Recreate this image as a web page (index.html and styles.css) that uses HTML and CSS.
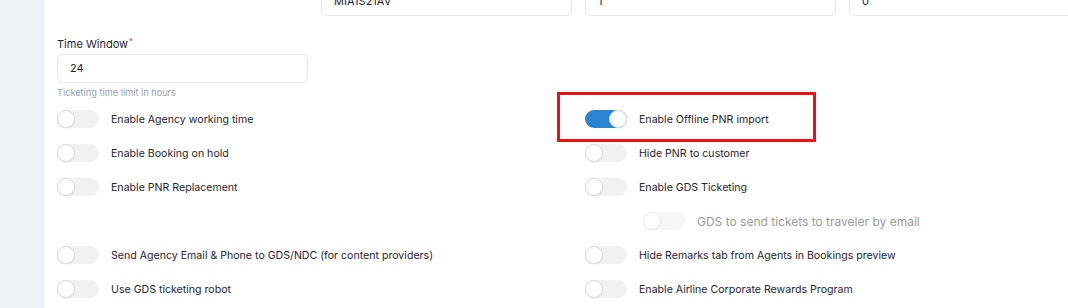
FILE: index.html
```html
<!DOCTYPE html>
<html lang="en">
<head>
  <meta charset="UTF-8" />
  <title>Ticketing Settings</title>
  <meta name="viewport" content="width=device-width, initial-scale=1.0" />
  <link rel="stylesheet" href="styles.css">
</head>
<body>
  <div class="layout">
    <div class="sidebar"></div>

    <div class="content">

      <!-- Top field row (cut off) -->
      <div class="field-row top-row">
        <div class="field"></div>
        <div class="field"><div class="input">MIA1S21AV</div></div>
        <div class="field"><div class="input">1</div></div>
        <div class="field"><div class="input">0</div></div>
      </div>

      <!-- Time window -->
      <div class="field-row">
        <div class="field">
          <label class="field-label">Time Window<span class="req">*</span></label>
          <div class="input">24</div>
          <div class="help">Ticketing time limit in hours</div>
        </div>
      </div>

      <!-- Toggles -->
      <div class="toggle-grid">
        <div class="toggle-row">
          <span class="toggle"></span>
          <span class="toggle-label">Enable Agency working time</span>
        </div>
        <div class="toggle-row">
          <span class="toggle on"></span>
          <span class="toggle-label">Enable Offline PNR import</span>
        </div>

        <div class="toggle-row">
          <span class="toggle"></span>
          <span class="toggle-label">Enable Booking on hold</span>
        </div>
        <div class="toggle-row">
          <span class="toggle"></span>
          <span class="toggle-label">Hide PNR to customer</span>
        </div>

        <div class="toggle-row">
          <span class="toggle"></span>
          <span class="toggle-label">Enable PNR Replacement</span>
        </div>
        <div class="toggle-row">
          <span class="toggle"></span>
          <span class="toggle-label">Enable GDS Ticketing</span>
        </div>

        <div class="toggle-row"></div>
        <div class="toggle-row nested disabled">
          <span class="toggle"></span>
          <span class="toggle-label">GDS to send tickets to traveler by email</span>
        </div>

        <div class="toggle-row">
          <span class="toggle"></span>
          <span class="toggle-label">Send Agency Email &amp; Phone to GDS/NDC (for content providers)</span>
        </div>
        <div class="toggle-row">
          <span class="toggle"></span>
          <span class="toggle-label">Hide Remarks tab from Agents in Bookings preview</span>
        </div>

        <div class="toggle-row">
          <span class="toggle"></span>
          <span class="toggle-label">Use GDS ticketing robot</span>
        </div>
        <div class="toggle-row">
          <span class="toggle"></span>
          <span class="toggle-label">Enable Airline Corporate Rewards Program</span>
        </div>
      </div>

    </div>
  </div>

  <!-- annotation highlight -->
  <div class="highlight"></div>
</body>
</html>
```

FILE: styles.css
```css
html, body {
  margin: 0;
  padding: 0;
  font-family: Inter, 'Noto Sans', sans-serif;
  background: #fff;
  color: #1f2433;
  overflow: hidden;
}

.layout {
  display: flex;
  height: 308px;
}

.sidebar {
  width: 43px;
  flex-shrink: 0;
  background: #eef2f6;
  border-right: 1px solid #e4e8ee;
}

.content {
  padding: 0 13px;
  flex-shrink: 0;
  width: 1043px;
}

.field-row {
  display: grid;
  grid-template-columns: repeat(4, 251px);
  column-gap: 13px;
}

.top-row {
  margin-top: -13px;
  margin-bottom: 21px;
}

.field-label {
  display: block;
  font-size: 11px;
  line-height: 14px;
  margin-bottom: 3px;
}

.req {
  color: #e53935;
  font-size: 8px;
  vertical-align: top;
  position: relative;
  top: -3px;
  margin-left: 1px;
}

.input {
  height: 27px;
  border: 1px solid #e3e7ee;
  border-radius: 6px;
  padding: 0 12px;
  font-size: 11px;
  line-height: 27px;
  color: #1f2433;
}

.help {
  font-size: 9.2px;
  color: #9aa0aa;
  margin-top: 4px;
  line-height: 12px;
}

.toggle-grid {
  display: grid;
  grid-template-columns: 515px 515px;
  column-gap: 13px;
  margin-top: 3px;
}

.toggle-row {
  display: flex;
  align-items: center;
  gap: 12px;
  height: 34px;
}

.toggle-row.nested {
  padding-left: 58px;
}

.toggle {
  position: relative;
  width: 42px;
  height: 18px;
  border-radius: 9px;
  background: #f1f1f1;
  flex-shrink: 0;
}

.toggle::after {
  content: "";
  position: absolute;
  left: 0;
  top: 0;
  width: 16px;
  height: 16px;
  border-radius: 50%;
  background: #fff;
  border: 1px solid #d9d9d9;
  box-shadow: 0 1px 1px rgba(0, 0, 0, 0.06);
}

.toggle.on {
  background: #2a83d3;
}

.toggle.on::after {
  left: auto;
  right: 0;
  border-color: #e6e6e6;
}

.toggle-label {
  font-size: 10.6px;
  white-space: nowrap;
}

.disabled .toggle {
  background: #f6f6f6;
}

.disabled .toggle::after {
  border-color: #ececec;
}

.disabled .toggle-label {
  font-size: 12px;
  color: #9a9a9a;
}

.highlight {
  position: absolute;
  left: 557px;
  top: 92px;
  width: 253px;
  height: 44px;
  border: 3px solid #ee1111;
}
```
